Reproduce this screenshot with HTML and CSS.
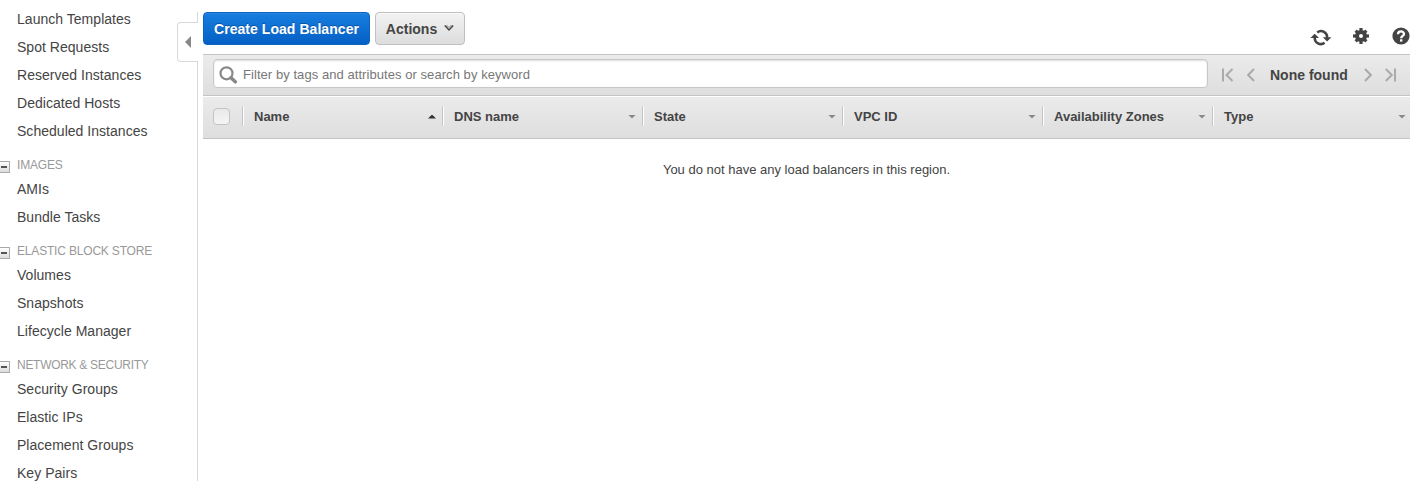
FILE: index.html
```html
<!DOCTYPE html>
<html lang="en">
<head>
<meta charset="utf-8">
<title>Load Balancers</title>
<link rel="stylesheet" href="styles.css">
</head>
<body>
<div class="app">
  <nav class="sidebar">
    <a class="item">Launch Templates</a>
    <a class="item">Spot Requests</a>
    <a class="item">Reserved Instances</a>
    <a class="item">Dedicated Hosts</a>
    <a class="item">Scheduled Instances</a>
    <div class="group"><span class="fold"></span><span>IMAGES</span></div>
    <a class="item">AMIs</a>
    <a class="item">Bundle Tasks</a>
    <div class="group"><span class="fold"></span><span>ELASTIC BLOCK STORE</span></div>
    <a class="item">Volumes</a>
    <a class="item">Snapshots</a>
    <a class="item">Lifecycle Manager</a>
    <div class="group tight"><span class="fold"></span><span>NETWORK &amp; SECURITY</span></div>
    <a class="item">Security Groups</a>
    <a class="item">Elastic IPs</a>
    <a class="item">Placement Groups</a>
    <a class="item">Key Pairs</a>
  </nav>
  <div class="divider">
    <div class="seg top"></div>
    <div class="tab"><svg width="6" height="12" viewBox="0 0 6 12"><path d="M6 0V12L0 6Z" fill="#888"/></svg></div>
    <div class="seg rest"></div>
  </div>
  <main class="main">
    <div class="toolbar">
      <button class="btn primary"><span>Create Load Balancer</span></button>
      <button class="btn"><span>Actions</span><svg width="10" height="8" viewBox="0 0 10 8"><path d="M.8 1.6L5 6L9.2 1.6" fill="none" stroke="#444" stroke-width="1.5"/><path d="M2.5 1L5 3.6L7.5 1" fill="none" stroke="#888" stroke-width="1"/></svg></button>
      <div class="tools">
        <svg class="refresh" width="22" height="18" viewBox="0 0 22 18"><path d="M4.7 8.5A6.2 6.2 0 0 0 14.6 13.8M7.2 3.4A6.2 6.2 0 0 1 17.1 9" fill="none" stroke="#444" stroke-width="2.5"/><path d="M.4 9L4.7 4.8L9 9ZM12.8 8.2L17.1 12.4L21.4 8.2Z" fill="#444"/></svg>
        <svg class="gear" width="16" height="16" viewBox="0 0 16 16"><g fill="#444"><circle cx="8" cy="8" r="6"/><path d="M6.4 0H9.6V16H6.4Z"/><path d="M0 6.4H16V9.6H0Z"/><path d="M6.4 .4H9.6V15.6H6.4Z" transform="rotate(45 8 8)"/><path d="M6.4 .4H9.6V15.6H6.4Z" transform="rotate(-45 8 8)"/></g><circle cx="8" cy="8" r="2" fill="#fff"/></svg>
        <svg class="help" width="18" height="18" viewBox="0 0 18 18"><circle cx="9" cy="9" r="8.6" fill="#444"/><path d="M6 7.2C6 3.6 12 3.6 12 7C12 9 9.2 8.9 9.2 11.2" fill="none" stroke="#fff" stroke-width="2.3"/><path d="M8 12.3H10.4V14.6H8Z" fill="#fff"/></svg>
      </div>
    </div>
    <div class="filter">
      <label class="search">
        <svg width="19" height="19" viewBox="0 0 19 19"><circle cx="7.5" cy="7.3" r="6" fill="none" stroke="#888" stroke-width="2.2"/><path d="M12 11.8L16.3 15.8" stroke="#888" stroke-width="3.6" stroke-linecap="round"/></svg>
        <span>Filter by tags and attributes or search by keyword</span>
      </label>
      <div class="pager">
        <svg width="12" height="14" viewBox="0 0 12 14"><path d="M1 .5V13.5M10.5 1L4.5 7L10.5 13" /></svg>
        <svg class="prev" width="8" height="14" viewBox="0 0 8 14"><path d="M7 1L1.2 7L7 13"/></svg>
        <b>None found</b>
        <svg class="next" width="8" height="14" viewBox="0 0 8 14"><path d="M1 1L6.8 7L1 13"/></svg>
        <svg class="last" width="12" height="14" viewBox="0 0 12 14"><path d="M10 .5V13.5M.8 1L6.8 7L.8 13"/></svg>
      </div>
    </div>
    <div class="thead">
      <div class="check"><span></span></div>
      <div class="th"><span>Name</span><i class="up"></i></div>
      <div class="th"><span>DNS name</span><i></i></div>
      <div class="th"><span>State</span><i></i></div>
      <div class="th"><span>VPC ID</span><i></i></div>
      <div class="th zones"><span>Availability Zones</span><i></i></div>
      <div class="th type"><span>Type</span><i></i></div>
    </div>
    <p class="empty">You do not have any load balancers in this region.</p>
  </main>
</div>
</body>
</html>
```

FILE: styles.css
```css
* { box-sizing: border-box; }
body {
  margin: 0;
  height: 481px;
  overflow: hidden;
  background: #fff;
  color: #444;
  font-family: "Liberation Sans", Arial, sans-serif;
}
svg { display: block; flex: none; }
.app { display: flex; height: 481px; }

.sidebar { width: 177px; padding-top: 5px; flex: none; }
.item { display: block; height: 28px; padding-left: 17px; font-size: 14px; line-height: 28px; letter-spacing: .03px; white-space: nowrap; }
.group { display: flex; height: 30px; padding-top: 10px; font-size: 12px; line-height: 20px; letter-spacing: -.18px; color: #999; white-space: nowrap; }
.tight { letter-spacing: -.29px; }
.fold { display: flex; align-items: center; width: 10px; height: 12px; margin: 6px 7px 0 0; border: 1px solid #aaa; border-left: 0; border-radius: 0 1px 1px 0; background: linear-gradient(#fff, #ddd); }
.fold::before { content: ""; width: 6px; height: 2px; margin-left: 1px; background: #555; }

.divider { display: flex; flex-direction: column; width: 21px; flex: none; padding-top: 12px; }
.seg { border-right: 1px solid #d8d8d8; }
.top { height: 11px; }
.rest { flex: 1; margin-top: -1px; }
.tab { display: flex; align-items: center; height: 40px; margin-top: -1px; padding-left: 7px; border: 1px solid #d8d8d8; border-right: 0; border-radius: 4px 0 0 4px; }

.main { width: 1207px; margin-left: 5px; }
.toolbar { display: flex; height: 54px; padding-top: 12px; gap: 5px; }
.btn { display: flex; align-items: center; justify-content: center; width: 90px; height: 33px; padding: 0; gap: 7px; border: 1px solid #c0c0c0; border-radius: 4px; background: linear-gradient(#f2f2f2, #ddd); box-shadow: inset 0 1px #fafafa; color: #444; font: bold 14px "Liberation Sans", Arial, sans-serif; white-space: nowrap; }
.btn svg { margin-top: -2px; }
.btn.primary { width: 167px; border-color: #0d62bd; background: linear-gradient(#187ee0, #0560c5); box-shadow: inset 0 1px #2b86df; color: #fff; text-shadow: 0 -1px #0754a5; letter-spacing: .05px; }
.tools { display: flex; margin-left: auto; }
.refresh { margin: 17px 21px 0 0; }
.gear { margin: 16px 23px 0 0; }
.help { margin: 15px 0 0 0; }

.filter { display: flex; height: 42px; padding: 4px 0 0 10px; border-top: 1px solid #c4c4c4; border-bottom: 1px solid #c4c4c4; background: linear-gradient(#ebebeb, #dedede); }
.search { display: flex; align-items: center; width: 995px; height: 29px; padding-left: 5px; border: 1px solid #c8c8c8; border-radius: 4px; background: #fff; box-shadow: inset 0 1px 2px #ddd; color: #777; font-size: 13px; letter-spacing: .06px; white-space: nowrap; }
.search span { margin-top: 2px; }
.search svg { margin: 4px 5px 0 0; }
.pager { display: flex; align-items: center; margin-left: 14px; height: 31px; font-size: 14px; white-space: nowrap; }
.pager path { fill: none; stroke: #aaa; stroke-width: 2; }
.prev { margin-left: 13px; }
.pager b { width: 78px; margin-left: 15px; }
.next { margin-left: 16px; }
.last { margin-left: 13px; }

.thead { display: flex; align-items: flex-start; height: 43px; padding-top: 11px; border-bottom: 1px solid #c4c4c4; background: linear-gradient(#ebebeb, #dedede); box-shadow: inset 0 1px #fff; font-size: 13px; font-weight: bold; }
.check { width: 39px; padding: 1px 0 0 10px; }
.check span { display: block; width: 17px; height: 17px; border: 1px solid #c4c4c4; border-radius: 4px; background: linear-gradient(#e9e9e9, #f5f5f5); }
.th { display: flex; align-items: center; width: 200px; height: 19px; padding: 0 6px 0 11px; border-left: 1px solid #c4c4c4; box-shadow: inset 1px 0 #fff; white-space: nowrap; }
.th i { width: 8px; height: 4px; margin-left: auto; background: #888; clip-path: polygon(0 0, 100% 0, 50% 100%); filter: none; }
.th .up { background: #333; clip-path: polygon(0 100%, 100% 100%, 50% 0); }
.zones { width: 170px; }
.type { width: 198px; padding-right: 4px; }
.empty { margin: 22px 0 0; font-size: 13px; line-height: 18px; text-align: center; }
```
